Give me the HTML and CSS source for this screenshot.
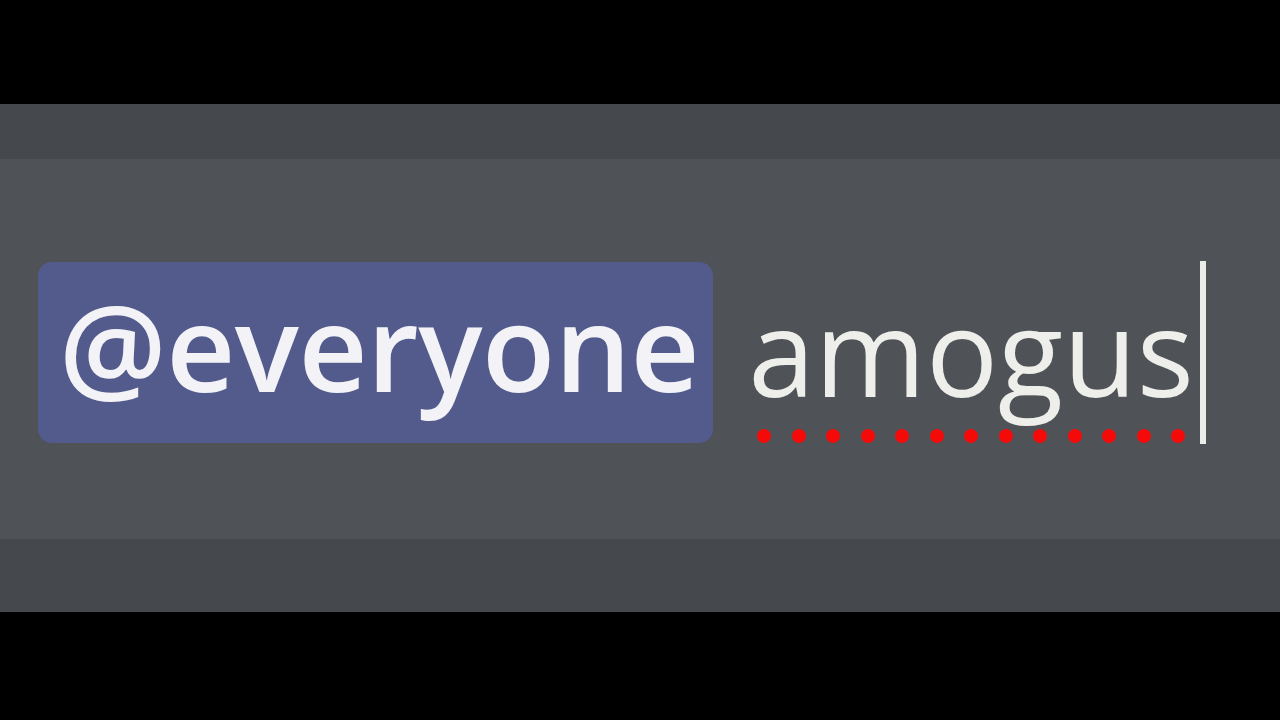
FILE: index.html
```html
<!DOCTYPE html>
<html>
<head>
<meta charset="utf-8">
<link rel="stylesheet" href="styles.css">
</head>
<body>
<div class="frame">
  <div class="panel">
    <div class="input">
      <span class="mention">@everyone</span>
      <span class="word">amogus<span class="squiggle"><i></i><i></i><i></i><i></i><i></i><i></i><i></i><i></i><i></i><i></i><i></i><i></i><i></i></span></span>
      <span class="caret"></span>
    </div>
  </div>
</div>
</body>
</html>
```
FILE: styles.css
```css
html, body {
  margin: 0;
  padding: 0;
  background: #000;
  width: 1280px;
  height: 720px;
  overflow: hidden;
}
.frame {
  padding-top: 104px;
}
.panel {
  height: 508px;
  box-sizing: border-box;
  background: #45484d;
  padding-top: 55px;
}
.input {
  height: 380px;
  box-sizing: border-box;
  padding-top: 6px;
  background: #4f5357;
  display: flex;
  align-items: center;
  padding-left: 38px;
  font-family: "Open Sans", "DejaVu Sans", sans-serif;
}
.mention {
  background: #525b8b;
  color: #f2f2f7;
  font-weight: 600;
  font-size: 120px;
  line-height: 167px;
  padding: 0 14px 14px 21px;
  border-radius: 14px;
  letter-spacing: -0.5px;
}
.word {
  position: relative;
  top: -2px;
  color: #eeeeea;
  font-weight: 500;
  font-size: 120px;
  line-height: 181px;
  margin-left: 35px;
}
.squiggle {
  position: absolute;
  left: 9px;
  top: 169px;
  display: flex;
  gap: 20.5px;
}
.squiggle i {
  width: 14px;
  height: 14px;
  border-radius: 50%;
  background: #f50a0a;
}
.caret {
  width: 6px;
  height: 183px;
  background: #ececea;
  margin-left: 6px;
}
```
